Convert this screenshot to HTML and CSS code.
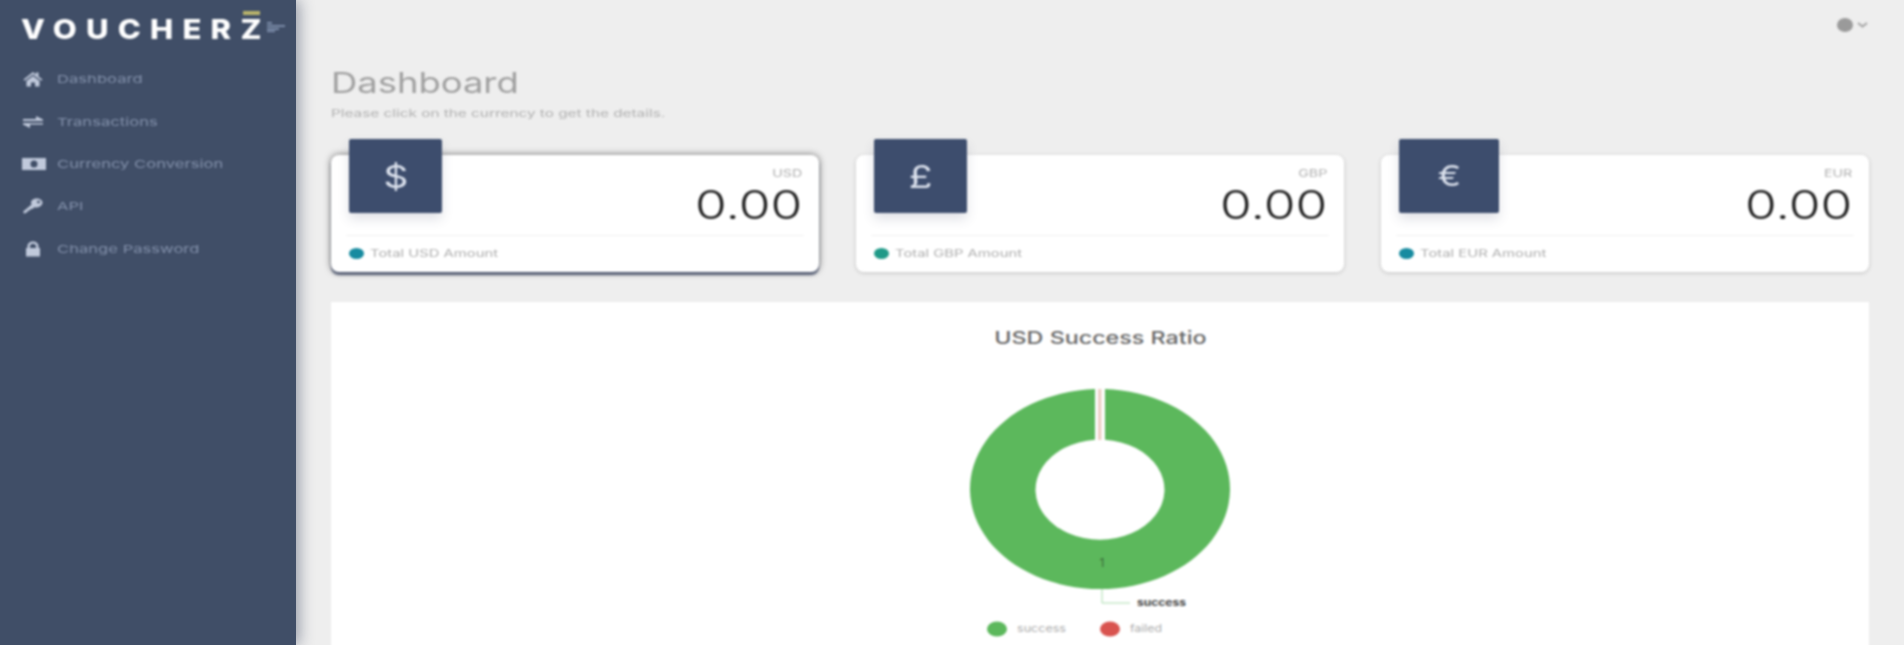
FILE: index.html
```html
<!DOCTYPE html>
<html lang="en">
<head>
<meta charset="utf-8">
<title>Voucherz Dashboard</title>
<link rel="stylesheet" href="styles.css">
</head>
<body>
<div class="app">
  <aside class="sidebar">
    <div class="logo">
      <span class="logo-word">VOUCHERZ</span>
      <span class="logo-bar"></span>
      <svg class="logo-mark" viewBox="0 0 18 10"><path d="M0 1h5M0 4h18M0 7h12M0 9.500h8" stroke="#8fa0bf" stroke-width="1.600"/></svg>
    </div>
    <nav class="nav">
      <a class="nav-item">
        <svg class="nav-icon" viewBox="0 0 20 16"><path d="M10 1 0.500 8.500l1.200 1.300L10 3.500l8.300 6.300 1.200-1.300L15.500 5.400V1.500h-2.500v2zM3.500 10v5.500h4.500v-4h4v4h4.500V10L10 5z"/></svg>
        <span class="wide nav-text">Dashboard</span>
      </a>
      <a class="nav-item">
        <svg class="nav-icon" viewBox="0 0 20 16"><path d="M0 5h13V2l7 3.500V7H0zM0 9h20v1.500H7V14l-7-3.500z"/></svg>
        <span class="wide nav-text">Transactions</span>
      </a>
      <a class="nav-item">
        <svg class="nav-icon nav-icon-wide" viewBox="0 0 24 14"><path fill-rule="evenodd" d="M0 1h24v12H0zM12 3.500a3.500 3.500 0 1 0 0 7 3.500 3.500 0 0 0 0-7z"/></svg>
        <span class="wide nav-text">Currency Conversion</span>
      </a>
      <a class="nav-item">
        <svg class="nav-icon" viewBox="0 0 20 16"><path fill-rule="evenodd" d="M19.500 4.500c0 2.700-3 5-6.500 5-.6 0-1.200-.1-1.700-.2L9.500 11H7.500L7 12.500H5L4.500 14l-3.500 1.800-.8-2.300L8.600 6.600C8.200 6 8 5.300 8 4.500 8 2.300 10.500.5 13.700.5s5.800 1.800 5.800 4zM15.500 2.800a1.500 1.200 0 1 0 0 2.400 1.500 1.200 0 0 0 0-2.400z"/></svg>
        <span class="wide nav-text">API</span>
      </a>
      <a class="nav-item">
        <svg class="nav-icon" viewBox="0 0 20 16"><path fill-rule="evenodd" d="M3 7h1.500V5C4.500 2.500 7 .5 10 .5s5.500 2 5.500 4.500v2H17v8.500H3zM7 7h6V5c0-1.300-1.300-2.300-3-2.300S7 3.700 7 5z"/></svg>
        <span class="wide nav-text">Change Password</span>
      </a>
    </nav>
  </aside>

  <main class="main">
    <header class="topbar">
      <svg class="user-icon" viewBox="0 0 32 16"><ellipse cx="8" cy="8" rx="8" ry="7"/><path d="M21 6l4.500 3.500L30 6" fill="none" stroke="#a5a5a5" stroke-width="2"/></svg>
    </header>

    <h1 class="title"><span class="wide">Dashboard</span></h1>
    <p class="subtitle"><span class="wide sub-text">Please click on the currency to get the details.</span></p>

    <section class="cards">
      <article class="card card-active">
        <div class="card-head">
          <div class="card-icon"><span class="wide-c">$</span></div>
          <div class="card-figures">
            <span class="card-code wide-r">USD</span>
            <span class="card-value wide-r">0.00</span>
          </div>
        </div>
        <div class="card-foot">
          <span class="dot dot-blue"></span>
          <span class="wide foot-text">Total USD Amount</span>
        </div>
      </article>

      <article class="card">
        <div class="card-head">
          <div class="card-icon"><span class="wide-c">£</span></div>
          <div class="card-figures">
            <span class="card-code wide-r">GBP</span>
            <span class="card-value wide-r">0.00</span>
          </div>
        </div>
        <div class="card-foot">
          <span class="dot dot-green"></span>
          <span class="wide foot-text">Total GBP Amount</span>
        </div>
      </article>

      <article class="card">
        <div class="card-head">
          <div class="card-icon card-icon-eur"><span class="wide-c">€</span></div>
          <div class="card-figures">
            <span class="card-code wide-r">EUR</span>
            <span class="card-value wide-r">0.00</span>
          </div>
        </div>
        <div class="card-foot">
          <span class="dot dot-blue"></span>
          <span class="wide foot-text">Total EUR Amount</span>
        </div>
      </article>
    </section>

    <section class="panel">
      <h2 class="panel-title"><span class="wide-c panel-text">USD Success Ratio</span></h2>
      <svg class="donut" viewBox="0 0 320 310" width="320" height="310">
        <path fill="#5cb85c" fill-rule="evenodd" d="M165 19.100A130 100 0 1 1 155 19.100L155 69.800A64.500 50 0 1 0 165 69.800Z"/>
        <rect x="158" y="19" width="3.500" height="51" fill="#eecfc6"/>
        <text class="slice-label" x="162" y="197" text-anchor="middle">1</text>
        <path d="M162 219v14h28" fill="none" stroke="#a9dcae" stroke-width="1"/>
        <text class="pointer-label" x="197" y="236" textLength="49" lengthAdjust="spacingAndGlyphs">success</text>
        <ellipse cx="57" cy="259" rx="10" ry="7.500" fill="#5cb85c"/>
        <text class="legend-label" x="77" y="262" textLength="49" lengthAdjust="spacingAndGlyphs">success</text>
        <ellipse cx="170" cy="259" rx="10" ry="7.500" fill="#d9534f"/>
        <text class="legend-label" x="190" y="262" textLength="32" lengthAdjust="spacingAndGlyphs">failed</text>
      </svg>
    </section>
  </main>
</div>
</body>
</html>
```
FILE: styles.css
```css
* { box-sizing: border-box; }

html, body {
  margin: 0;
  height: 650px;
  background: #fff;
  overflow: hidden;
  font-family: Inter, "Liberation Sans", sans-serif;
}

.app {
  display: flex;
  align-items: flex-start;
  height: 645px;
  overflow: hidden;
  background: #eee;
}

.wide { display: inline-block; transform: scaleX(1.3); transform-origin: left center; }
.wide-r { display: block; transform: scaleX(1.36); transform-origin: right center; }
.wide-c { display: inline-block; transform: scaleX(1.25); }

/* Sidebar */
.sidebar {
  flex: 0 0 296px;
  height: 645px;
  background: #404e67;
  box-shadow: 3px 0 14px rgba(40, 50, 80, .45);
  position: relative;
  z-index: 2;
  padding: 0 0 0 21px;
}

.logo { position: relative; height: 58px; padding-top: 15px; filter: blur(0.8px); }
.logo-word {
  display: inline-block;
  color: #fff;
  font-size: 27px;
  line-height: 30px;
  font-weight: 800;
  letter-spacing: 8px;
  white-space: nowrap;
  transform: scaleX(1.15);
  transform-origin: left center;
}
.logo-bar {
  position: absolute;
  left: 222px;
  top: 11px;
  width: 17px;
  height: 4px;
  background: #b9b46c;
}
.logo-mark {
  position: absolute;
  left: 246px;
  top: 22px;
  width: 18px;
  height: 10px;
}

.nav { display: flex; flex-direction: column; filter: blur(0.8px); }
.nav-item {
  display: flex;
  align-items: center;
  height: 42.400px;
  color: #8290aa;
}
.nav-icon { width: 20px; height: 16px; margin-left: 2px; fill: #c0c9db; flex: none; }
.nav-icon-wide { width: 24px; height: 14px; margin-left: 1px; margin-right: -3px; }
.nav-text { margin-left: 14px; font-size: 11px; white-space: nowrap; transform: scaleX(1.51); }

/* Main */
.main {
  flex: 1;
  min-width: 0;
  height: 665px;
  padding: 0 35px;
  display: flex;
  flex-direction: column;
  filter: blur(0.8px);
}

.topbar { height: 50px; display: flex; justify-content: flex-end; align-items: center; flex: none; }
.user-icon { width: 32px; height: 16px; fill: #9a9a9a; }

.title {
  margin: 14px 0 0 0;
  font-size: 28px;
  line-height: 38px;
  font-weight: 400;
  color: #a0a0a0;
}
.subtitle {
  margin: 5px 0 0 0;
  font-size: 10.500px;
  line-height: 14px;
  color: #b0b0b0;
}
.sub-text { transform: scaleX(1.46); white-space: nowrap; }

.cards {
  display: grid;
  grid-template-columns: repeat(3, 1fr);
  gap: 37px;
  margin-top: 34px;
  flex: none;
}

.card {
  height: 117px;
  background: #fff;
  border-radius: 8px;
  box-shadow: 0 1px 4px rgba(0, 0, 0, .18);
  padding: 0 15px;
  display: flex;
  flex-direction: column;
}
.card-active { box-shadow: 0 3px 2px rgba(50, 60, 90, .75), 0 0 7px rgba(0, 0, 0, .55); }

.card-head {
  flex: none;
  height: 81px;
  display: flex;
  justify-content: space-between;
  border-bottom: 1px solid #f1f1f1;
}

.card-icon {
  width: 93px;
  height: 74px;
  margin: -16px 0 0 3px;
  border-radius: 2px;
  background: #3d4d6d;
  box-shadow: 0 6px 12px rgba(60, 70, 100, .16);
  color: #dde3ee;
  font-size: 31px;
  font-weight: 400;
  display: flex;
  align-items: center;
  justify-content: center;
}
.card-icon-eur { width: 100px; font-size: 28px; }

.card-figures { text-align: right; padding: 12px 2px 0 0; }
.card-code { font-size: 10.500px; line-height: 14px; color: #b0b0b0; }
.card-value { font-size: 39px; line-height: 44px; font-weight: 300; color: #1f1f1f; margin-top: 2px; transform: scaleX(1.32); }

.card-foot { flex: 1; display: flex; align-items: center; padding: 0 0 2px 3px; }
.dot {
  width: 15px;
  height: 11px;
  border-radius: 50%;
  flex: none;
  background: #178ba0;
}
.dot-green { background: #1f9a88; }
.foot-text { margin-left: 6px; font-size: 10px; color: #adadad; white-space: nowrap; transform: scaleX(1.48); }

.panel {
  margin-top: 30px;
  flex: 1;
  min-height: 0;
  background: #fff;
  display: flex;
  flex-direction: column;
  align-items: center;
  overflow: hidden;
}

.panel-title {
  margin: 24px 0 0;
  font-size: 17px;
  line-height: 24px;
  font-weight: 500;
  color: #666;
}
.panel-text { transform: scaleX(1.37); }

.donut { flex: none; margin-top: 20px; }
.slice-label { font: 12px Inter, sans-serif; fill: #3a6b3a; }
.pointer-label { font: 700 9.500px Inter, sans-serif; fill: #444; }
.legend-label { font: 10px Inter, sans-serif; fill: #aaa; }
```
